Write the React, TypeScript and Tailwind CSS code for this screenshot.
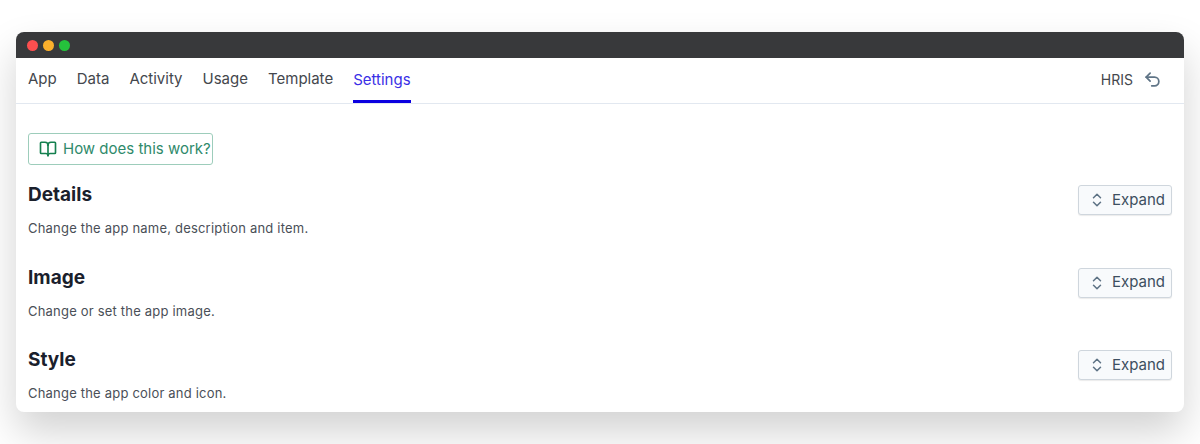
import { BookOpen, ChevronDown, ChevronUp, Undo2 } from "lucide-react"

const tabs = ["App", "Data", "Activity", "Usage", "Template", "Settings"]

const sections = [
    { title: "Details", text: "Change the app name, description and item." },
    { title: "Image", text: "Change or set the app image." },
    { title: "Style", text: "Change the app color and icon." },
]

function Section({ title, text }: { title: string; text: string }) {
    return (
        <div className="flex items-start justify-between h-[50px] mb-[32.5px]">
            <div>
                <h2 className="text-[19px] leading-[26px] font-bold text-[#1a202c]">{title}</h2>
                <p className="mt-[11px] text-[13px] leading-[18px] tracking-[0.2px] text-[#4a4f57]">{text}</p>
            </div>
            <button className="mt-[3px] flex h-[30px] w-[94px] items-center rounded-[3px] border border-[#cfd6dd] bg-[#f8fafc] pl-[11px] text-[15px] text-[#3d4f60] shadow-[0_1px_1px_rgba(0,0,0,0.08)]">
                <span className="mr-[9px] flex w-[13px] flex-col items-center text-[#5f7486]">
                    <ChevronUp size={14} strokeWidth={2.6} className="-mb-[3px]" />
                    <ChevronDown size={14} strokeWidth={2.6} className="-mt-[3px]" />
                </span>
                Expand
            </button>
        </div>
    )
}

export default function App() {
    return (
        <div className="h-[444px] overflow-hidden bg-white px-4 pt-8 font-['Inter',sans-serif]">
            <div className="h-[380px] overflow-hidden rounded-lg bg-white shadow-[0_20px_40px_rgba(0,0,0,0.18)]">
                <div className="flex h-[26px] items-center gap-[5px] bg-[#38393b] pl-[11px]">
                    <span className="h-[11px] w-[11px] rounded-full bg-[#fb4f4f]" />
                    <span className="h-[11px] w-[11px] rounded-full bg-[#fbb02c]" />
                    <span className="h-[11px] w-[11px] rounded-full bg-[#25c23c]" />
                </div>
                <div className="flex h-[46px] items-stretch justify-between border-b border-[#e2e8f0] pl-3 pr-3">
                    <div className="flex gap-5">
                        {tabs.map((t) => (
                            <div
                                key={t}
                                className={
                                    t === "Settings"
                                        ? "flex items-center border-b-[3px] border-[#0b00e0] pt-[3px] text-[15px] text-[#3a2fe6]"
                                        : "flex items-center pt-0 pb-[3px] text-[15px] text-[#44474d]"
                                }
                            >
                                {t}
                            </div>
                        ))}
                    </div>
                    <div className="flex items-center pb-[3px] text-[14px] text-[#44474d]">
                        HRIS
                        <Undo2 size={19} strokeWidth={2.2} className="ml-[10px] mr-[10px] text-[#5f7486]" />
                    </div>
                </div>
                <div className="px-3 pt-[29px]">
                    <button className="flex h-[32px] w-[185px] items-center rounded-[3px] border border-[#9dcdbb] pl-[10px] text-[15px] text-[#2f8a6b]">
                        <BookOpen size={18} strokeWidth={2.2} className="mr-[6px] text-[#15804f]" />
                        How does this work?
                    </button>
                    <div className="mt-[17px]">
                        {sections.map((s) => (
                            <Section key={s.title} title={s.title} text={s.text} />
                        ))}
                    </div>
                </div>
            </div>
        </div>
    )
}
